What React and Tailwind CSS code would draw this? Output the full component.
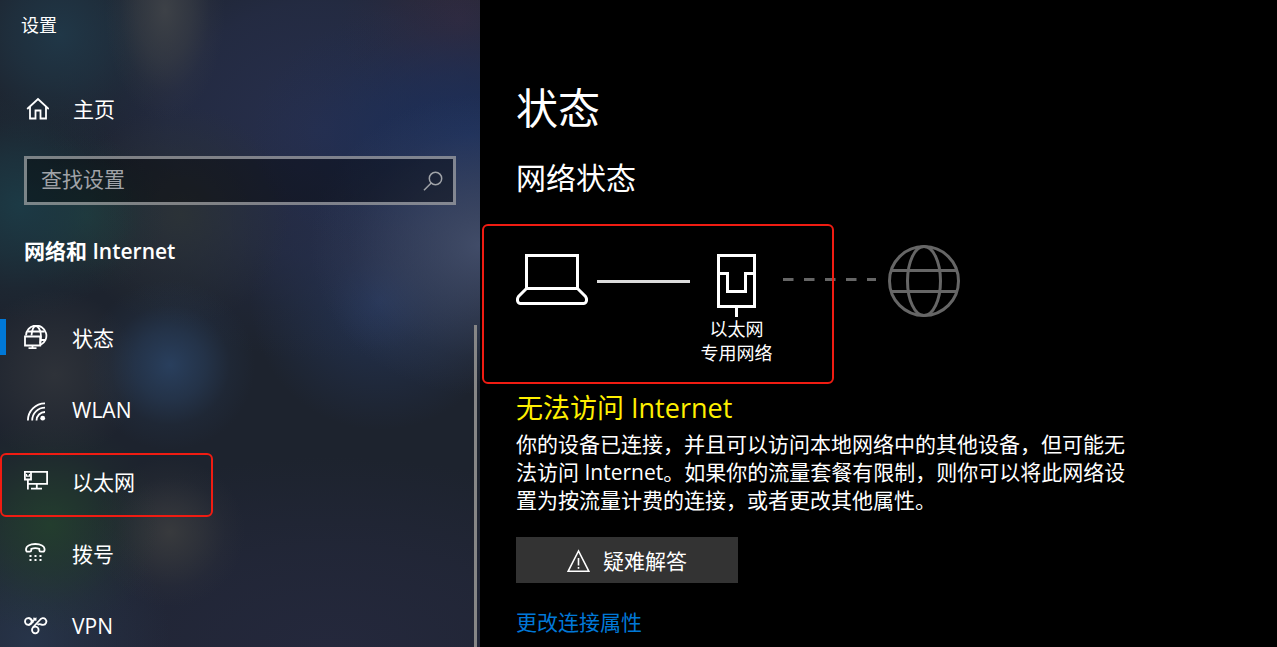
// pages/NetworkStatusPage.jsx
import React, { useState } from 'react';

const HomeIcon = () => (
  <svg className="w-6 h-6 shrink-0" viewBox="0 0 24 24" fill="none" stroke="currentColor" strokeWidth="1.8">
    <path d="M2.2 12 13 2 23.8 12" />
    <path d="M5 9.6V21.500H10.500V13.500H15.500V21.500H21V9.6" />
  </svg>
);

const SearchIcon = () => (
  <svg className="w-5 h-5 shrink-0" viewBox="0 0 20 20" fill="none" stroke="currentColor" strokeWidth="1.5">
    <circle cx="12.5" cy="7.5" r="6.2" />
    <path d="M8.2 12 1 19.2" />
  </svg>
);

const StatusIcon = () => (
  <svg className="w-6 h-6 shrink-0" viewBox="0 0 24 24" fill="none" stroke="currentColor" strokeWidth="1.8">
    <path d="M2 10.5A10.200 10.200 0 1 1 16.500 20" />
    <path d="M7.500 10.500C8 5 9.800 1 12 1s5 4.500 5 10.500c0 3-.2 5-.8 7" />
    <path d="M3.500 6.500H20.500M17 15H21.500" />
    <path d="M1 11.500H16.200V20.500H1z" />
    <path d="M8.500 20.500V23.200M4.500 23.200H12.500" />
  </svg>
);

const WlanIcon = () => (
  <svg className="w-6 h-6 shrink-0" viewBox="0 0 24 24" fill="none" stroke="currentColor" strokeWidth="1.8">
    <path d="M3.900 23.500A17.100 17.100 0 0 1 21 6.400" />
    <path d="M8.200 23.500A12.800 12.800 0 0 1 21 10.700" />
    <path d="M12.500 23.500A8.500 8.500 0 0 1 21 15" />
    <circle cx="18.700" cy="21.200" r="2.400" fill="currentColor" stroke="none" />
  </svg>
);

const EthernetIcon = () => (
  <svg className="w-6 h-6 shrink-0" viewBox="0 0 24 24" fill="none" stroke="currentColor" strokeWidth="1.8">
    <path d="M7 2.800H23.100V14.800H4" />
    <path d="M.900 2.800H7V10.500H.900z" />
    <path d="M2.500 5v2.200h3V5" strokeWidth="1.200" />
    <path d="M3.900 10.500V20.500" />
    <path d="M12.800 14.800V19.500M7 19.600H18" />
  </svg>
);

const DialUpIcon = () => (
  <svg className="w-6 h-6 shrink-0" viewBox="0 0 24 24" fill="none" stroke="currentColor" strokeWidth="1.8">
    <path d="M2 8.500C2 5 6 3 11.300 3s9.300 2 9.300 5.500c0 1.500-.6 2.200-1.600 2.200h-2.200c-1 0-1.500-.6-1.500-1.600V7.800c-2.400-.7-5.600-.7-8 0v1.300c0 1-.5 1.600-1.500 1.600H3.600C2.600 10.700 2 10 2 8.500z" />
    <path d="M5.500 15h2M10.500 15h2M15.500 15h2M5.500 19h2M10.500 19h2M15.500 19h2" strokeWidth="2" />
  </svg>
);

const VpnIcon = () => (
  <svg className="w-6 h-6 shrink-0" viewBox="0 0 24 24" fill="none" stroke="currentColor" strokeWidth="1.800">
    <circle cx="4.300" cy="8.500" r="3.300" />
    <circle cx="11.300" cy="17" r="3.300" />
    <path d="M4.300 5.200C8 5.200 8.500 8.200 8.800 10M4.300 11.800C9 11.800 9 5.200 12.500 5.500" />
    <path d="M8.800 14.500 15.800 7C17.300 4.800 20 4.600 21.400 6.200A3.300 3.300 0 0 1 19 11.800C16.500 11.900 15.200 9.800 13.600 12" />
    <path d="M9.500 4.800 12.300 7.500" strokeWidth="1.400" />
  </svg>
);

const WarningIcon = () => (
  <svg className="w-6 h-6 shrink-0" viewBox="0 0 24 24" fill="none" stroke="currentColor" strokeWidth="1.6">
    <path d="M11.500 2 1.200 22.200H21.800z" />
    <path d="M11.500 9v7.500M11.500 18v1.800" />
  </svg>
);

const LaptopIcon = () => (
  <svg className="w-[72px] h-[51px] shrink-0" viewBox="0 0 72 51" fill="none" stroke="currentColor" strokeWidth="3">
    <path d="M10.500 34.500V1.500H61.500V34.500z" />
    <path d="M10.500 34.500 2.500 42.500C.5 45.500 1.500 49.500 4.500 49.500H67.500C70.500 49.500 71.500 45.500 69.500 42.500L61.500 34.500" />
  </svg>
);

const PortIcon = () => (
  <svg className="w-10 h-[63px] shrink-0" viewBox="0 0 40 63" fill="none" stroke="currentColor" strokeWidth="3">
    <path d="M1.500 1.500H37.500V52.500H1.500z" />
    <path d="M1.500 19.500H10.500V37.500H28.500V19.500H37.500" />
    <path d="M19.500 52.500V63" />
  </svg>
);

const GlobeIcon = () => (
  <svg className="w-[72px] h-[72px] shrink-0" viewBox="0 0 72 72" fill="none" stroke="currentColor" strokeWidth="3">
    <circle cx="36" cy="36" r="34.500" />
    <ellipse cx="36" cy="36" rx="16.500" ry="34.500" />
    <path d="M3 25.500H69M3 46.500H69" />
  </svg>
);

const NAV_ITEMS = [
  { id: 'status', label: '状态', icon: StatusIcon },
  { id: 'wlan', label: 'WLAN', icon: WlanIcon },
  { id: 'ethernet', label: '以太网', icon: EthernetIcon, highlighted: true },
  { id: 'dialup', label: '拨号', icon: DialUpIcon },
  { id: 'vpn', label: 'VPN', icon: VpnIcon },
];

const Sidebar = () => {
  const [active, setActive] = useState('status');
  const [query, setQuery] = useState('');

  return (
    <aside className="w-[480px] shrink-0 flex flex-col overflow-hidden bg-[#1d232e] bg-[radial-gradient(ellipse_60px_110px_at_165px_10px,#3d4147,#3d414790_45%,#3d414728_75%,transparent),radial-gradient(circle_at_60px_35px,#203747_0px,#20374790_50px,#20374728_85px,transparent_115px),radial-gradient(ellipse_170px_150px_at_480px_245px,#414c68,#414c6890_40%,#414c6828_75%,transparent),radial-gradient(ellipse_220px_140px_at_470px_135px,#1c2f5a,#1c2f5a90_45%,#1c2f5a28_75%,transparent),radial-gradient(circle_at_460px_20px,#302a3e_0px,#302a3e90_50px,#302a3e28_90px,transparent_120px),radial-gradient(circle_at_20px_205px,#1c3a45_0px,#1c3a4590_50px,#1c3a4528_85px,transparent_115px),radial-gradient(circle_at_85px_215px,#20393a_0px,#20393a90_35px,#20393a28_60px,transparent_80px),radial-gradient(circle_at_170px_365px,#293f5d_0px,#293f5d90_35px,#293f5d28_60px,transparent_85px),radial-gradient(circle_at_55px_375px,#2e3239_0px,#2e323990_40px,transparent_85px),radial-gradient(circle_at_50px_525px,#233d2e_0px,#233d2e90_45px,#233d2e28_80px,transparent_110px),radial-gradient(circle_at_170px_532px,#383a3d_0px,#383a3d90_30px,#383a3d28_55px,transparent_75px),radial-gradient(circle_at_180px_215px,#2b3237_0px,#2b323780_50px,transparent_110px),radial-gradient(ellipse_270px_230px_at_320px_130px,#272f4d,#272f4da0_55%,#272f4d30_80%,transparent),radial-gradient(circle_at_380px_300px,#24365a_0px,#24365a80_50px,transparent_130px),radial-gradient(circle_at_30px_640px,#273449_0px,#27344990_60px,transparent_140px),radial-gradient(ellipse_380px_190px_at_330px_647px,#24283c,#24283ca0_50%,transparent)]">
      <div className="pt-[13px] pl-[21px] text-lg leading-6">设置</div>

      <a href="#home" className="mt-[58px] pl-[25px] h-7 flex items-center gap-6">
        <HomeIcon />
        主页
      </a>

      <label className="mt-[33px] mx-6 h-[49px] shrink-0 flex items-center pl-[14px] pr-[10px] border-[3px] border-white/45 bg-black/40 text-[#a0a3a8]">
        <input
          type="text"
          aria-label="查找设置"
          placeholder="查找设置"
          value={query}
          onChange={(e) => setQuery(e.target.value)}
          className="flex-1 min-w-0 pb-1 bg-transparent outline-none text-white placeholder:text-[#a0a3a8]"
        />
        <SearchIcon />
      </label>

      <h2 className="mt-8 pl-6 font-semibold">网络和 Internet</h2>

      <div className="mt-9 flex-1 min-h-0 flex">
        <nav className="flex-1">
          {NAV_ITEMS.map(({ id, label, icon: Icon, highlighted }) => (
            <a
              key={id}
              href={`#${id}`}
              onClick={() => setActive(id)}
              className="relative h-[72px] flex items-center"
            >
              <span className={`w-[6px] h-9 mr-[18px] ${active === id ? 'bg-[#0078d7]' : ''}`} />
              <Icon />
              <span className="ml-6 pt-0.5">{label}</span>
              {highlighted && (
                <span className="absolute left-0 top-2 w-[213px] h-16 border-2 border-[#f01c12] rounded-md" />
              )}
            </a>
          ))}
        </nav>
        {/* Scroll thumb */}
        <div className="mt-6 mr-[3px] w-[3px] bg-[#868686]" />
      </div>
    </aside>
  );
};

const ConnectionDiagram = () => (
  <div className="relative mt-[49px] flex items-start">
    <div className="pt-[9px]">
      <LaptopIcon />
    </div>
    <div className="mt-[35px] ml-[9px] w-[93px] h-[3px] bg-[#dcdcdc]" />
    <div className="w-[93px] pt-[9px] flex flex-col items-center text-lg leading-6 whitespace-nowrap">
      <PortIcon />
      <span>以太网</span>
      <span>专用网络</span>
    </div>
    <svg className="mt-[33px] w-[93px] h-[3px]" viewBox="0 0 93 3" stroke="#666" strokeWidth="3">
      <path d="M0 1.500H93" strokeDasharray="10.500 10.500" />
    </svg>
    <div className="ml-3 text-[#666]">
      <GlobeIcon />
    </div>
    <div className="absolute -left-[34px] -top-[21px] w-[352px] h-[160px] border-2 border-[#f01c12] rounded-md" />
  </div>
);

const App = () => {
  return (
    <div className="h-screen flex overflow-hidden bg-black text-white text-[21px] leading-7 font-['Open_Sans','Noto_Sans_CJK_SC',sans-serif]">
      <Sidebar />

      <main className="flex-1 min-w-0 pl-9 pr-6 pt-20">
        <h1 className="text-[42px] leading-[56px]">状态</h1>
        <h2 className="mt-6 text-3xl leading-9">网络状态</h2>

        <ConnectionDiagram />

        <h3 className="mt-[25px] text-[27px] leading-9 text-[#fff000]">无法访问 Internet</h3>
        <p className="mt-1 max-w-[620px]">
          你的设备已连接，并且可以访问本地网络中的其他设备，但可能无法访问 Internet。如果你的流量套餐有限制，则你可以将此网络设置为按流量计费的连接，或者更改其他属性。
        </p>

        <button type="button" className="mt-[23px] h-[46px] px-[51px] pt-0.5 flex items-center gap-3 bg-[#333]">
          <WarningIcon />
          疑难解答
        </button>

        <a href="#properties" className="mt-[25px] inline-block text-[#0078d7]">
          更改连接属性
        </a>
      </main>
    </div>
  );
};

export default App;
